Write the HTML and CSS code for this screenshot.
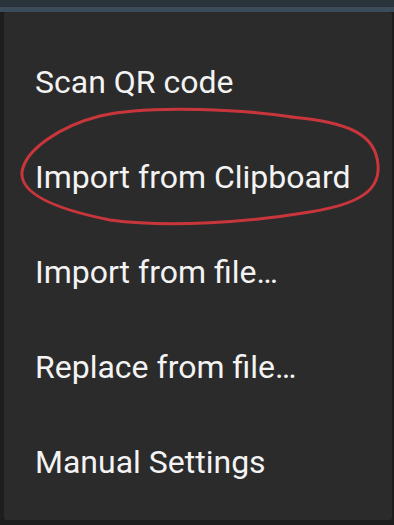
FILE: index.html
```html
<!DOCTYPE html>
<html>
<head>
<meta charset="utf-8">
<link rel="stylesheet" href="styles.css">
</head>
<body>
<div class="screen">
  <div class="appbar"></div>
  <div class="content"></div>
  <div class="menu">
    <div class="item">Scan QR code</div>
    <div class="item">Import from Clipboard</div>
    <div class="item">Import from file…</div>
    <div class="item">Replace from file…</div>
    <div class="item">Manual Settings</div>
  </div>
  <svg class="scribble" width="394" height="525" viewBox="0 0 394 525">
    <path d="M 300 118 C 250 110, 150 104, 100 116 C 60 126, 25 150, 22 172 C 20 192, 50 208, 110 220 C 170 228, 250 222, 310 212 C 360 204, 380 190, 378 165 C 376 135, 350 122, 290 117" fill="none" stroke="#c8363c" stroke-width="3" stroke-linecap="round"/>
  </svg>
</div>
</body>
</html>
```
FILE: styles.css
```css
html, body {
  margin: 0;
  padding: 0;
  background: #1d1d1d;
}
.screen {
  position: relative;
  width: 394px;
  height: 525px;
  overflow: hidden;
  font-family: Roboto, "Noto Sans", sans-serif;
}
.appbar {
  height: 12px;
  background: linear-gradient(#28343a 0 7px, #3b4c58 7px 12px);
}
.content {
  height: 513px;
  background: #1d1d1d;
}
.menu {
  position: absolute;
  top: 12px;
  left: 4px;
  width: 388px;
  height: 508px;
  background: #2b2b2b;
  border-radius: 3px;
  display: flex;
  flex-direction: column;
  padding-top: 22px;
  box-sizing: border-box;
}
.item {
  color: #f3f3f3;
  font-size: 32px;
  line-height: 96px;
  height: 95px;
  padding-left: 31px;
  white-space: nowrap;
}
.scribble {
  position: absolute;
  left: 0;
  top: 0;
  pointer-events: none;
}
```
